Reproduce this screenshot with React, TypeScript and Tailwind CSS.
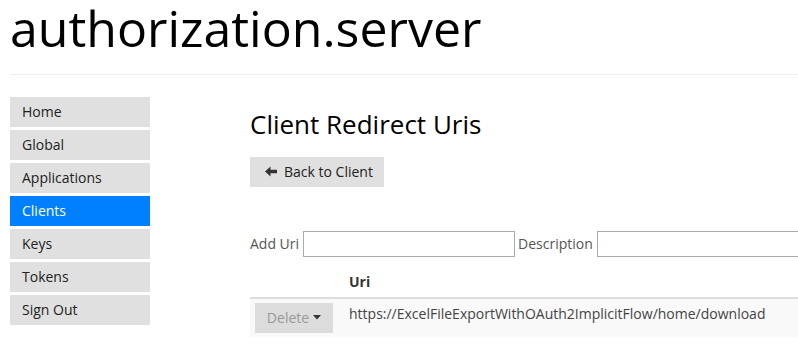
import { useState } from 'react'

const navItems = ['Home', 'Global', 'Applications', 'Clients', 'Keys', 'Tokens', 'Sign Out']

function ArrowLeft() {
  return (
    <svg width="12" height="11" viewBox="0 0 12 11" className="shrink-0">
      <path d="M0 5.5 L5.5 0.5 L5.5 3.8 L12 3.8 L12 7.2 L5.5 7.2 L5.5 10.5 Z" fill="#333" />
    </svg>
  )
}

export default function App() {
  const [active] = useState('Clients')

  return (
    <div className="w-[798px] h-[345px] overflow-hidden bg-white text-[#333] font-['Open_Sans',sans-serif]">
      <div className="pl-[10px]">
        <h1 className="text-[50px] leading-[56px] text-black h-[74px] whitespace-nowrap">authorization.server</h1>
        <div className="h-px bg-[#eeeeee]" />
      </div>

      <div className="flex pl-[10px] pt-[22px]">
        <nav className="w-[140px] flex flex-col gap-[3px] shrink-0">
          {navItems.map((item) => (
            <div
              key={item}
              className={
                item === active
                  ? 'h-[30px] pl-[12px] pb-[2px] flex items-center text-[14px] bg-[#0080ff] text-white'
                  : 'h-[30px] pl-[12px] pb-[2px] flex items-center text-[14px] bg-[#e0e0e0] text-[#222]'
              }
            >
              {item}
            </div>
          ))}
        </nav>

        <main className="ml-[100px] flex-1 min-w-0 overflow-hidden">
          <h2 className="text-[26px] leading-[1.1] text-black mt-[13px]">Client Redirect Uris</h2>

          <button className="mt-[18px] h-[30px] w-[134px] bg-[#e0e0e0] flex items-center gap-[7px] pl-[15px] text-[14px] text-[#222]">
            <ArrowLeft />
            <span>Back to Client</span>
          </button>

          <div className="mt-[44px] flex items-center text-[14px] text-[#555] whitespace-nowrap">
            <span>Add Uri</span>
            <input className="ml-[4px] w-[212px] h-[26px] border border-[#aaaaaa] bg-white shrink-0" />
            <span className="ml-[3px]">Description</span>
            <input className="ml-[4px] w-[220px] h-[26px] border border-[#aaaaaa] bg-white shrink-0" />
          </div>

          <table className="mt-[10px] w-full text-[14px] border-collapse">
            <thead>
              <tr className="border-b-2 border-[#dddddd]">
                <th className="w-[94px] p-[5px] leading-[20px]" />
                <th className="text-left p-[5px] leading-[20px] font-bold text-[#333]">Uri</th>
              </tr>
            </thead>
            <tbody>
              <tr className="bg-[#f9f9f9]">
                <td className="px-[5px] pt-[4px] pb-[4px] align-top">
                  <button className="w-[78px] h-[30px] bg-[#dcdcdc] text-[#999] flex items-center justify-center gap-[4px]">
                    <span>Delete</span>
                    <svg width="8" height="5" viewBox="0 0 8 5">
                      <path d="M0 0 L8 0 L4 4.5 Z" fill="#333" />
                    </svg>
                  </button>
                </td>
                <td className="p-[5px] leading-[20px] align-top text-[#444] whitespace-nowrap">
                  https://ExcelFileExportWithOAuth2ImplicitFlow/home/download
                </td>
              </tr>
            </tbody>
          </table>
        </main>
      </div>
    </div>
  )
}
